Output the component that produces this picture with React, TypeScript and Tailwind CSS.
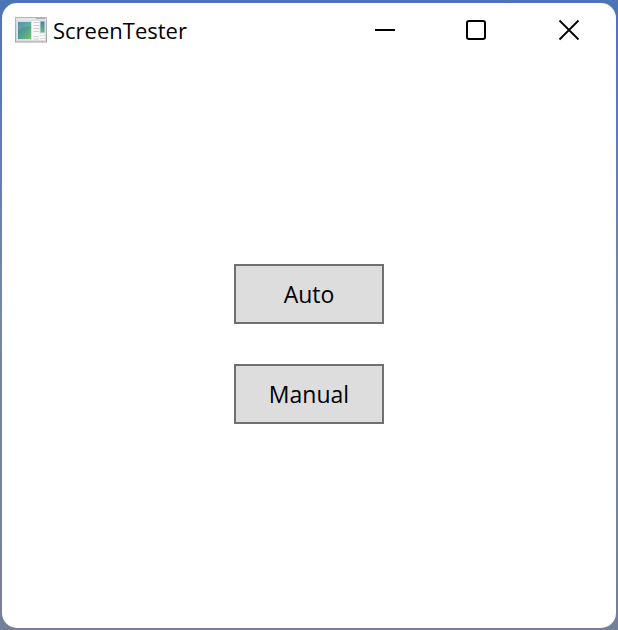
import React from "react";

function AppIcon() {
  return (
    <svg width="32" height="26" viewBox="0 0 32 26" aria-hidden="true">
      <defs>
        <linearGradient id="pane" x1="0" y1="0" x2="1" y2="1">
          <stop offset="0" stopColor="#4680a6" />
          <stop offset="0.5" stopColor="#4f9f94" />
          <stop offset="1" stopColor="#6fc36a" />
        </linearGradient>
        <linearGradient id="side" x1="0" y1="0" x2="0" y2="1">
          <stop offset="0" stopColor="#4680a8" />
          <stop offset="1" stopColor="#68bb78" />
        </linearGradient>
        <linearGradient id="frame" x1="0" y1="0" x2="0" y2="1">
          <stop offset="0" stopColor="#b4b9c1" />
          <stop offset="1" stopColor="#a2a2a2" />
        </linearGradient>
      </defs>
      <rect x="0.5" y="0.5" width="31" height="24.5" fill="#dcdddf" stroke="url(#frame)" />
      <path d="M1 1.5H31V3H1z" fill="#e6e9ee" />
      <path d="M21 1H30V2H21z" fill="#a4aab5" />
      <rect x="2" y="4" width="28" height="19" fill="#f8f8f8" />
      <rect x="2" y="4" width="15" height="19" fill="#d5e2e2" />
      <rect x="3" y="5" width="13" height="17" fill="url(#pane)" />
      <path d="M3 5H16V9Q9 9 3 14z" fill="#ffffff" opacity="0.12" />
      <path d="M18.500 5.500H24M18.500 8.500H24M18.500 11.500H24M18.500 14.500H24M18.500 19.500H24M18.500 22H24" stroke="#cfcfcf" />
      <rect x="25" y="4" width="5" height="12" fill="url(#side)" stroke="#d8e2e6" />
      <path d="M25 18.500H30M25 21.500H30" stroke="#dddddd" />
    </svg>
  );
}

function CaptionButton({ label, children }: { label: string; children: React.ReactNode }) {
  return (
    <button type="button" aria-label={label} className="flex w-[92px] items-center justify-center hover:bg-gray-100">
      <svg width="24" height="24" viewBox="0 0 24 24" fill="none" stroke="#000000" strokeWidth="2" aria-hidden="true">
        {children}
      </svg>
    </button>
  );
}

function ActionButton({ children }: { children: React.ReactNode }) {
  return (
    <button type="button" className="h-[60px] w-[150px] border-2 border-[#707070] bg-[#dddddd] text-[23px] leading-8 hover:bg-[#bee6fd]">
      {children}
    </button>
  );
}

export default function App() {
  return (
    <div className="flex min-h-screen flex-col bg-linear-to-b from-[#4c75b5] via-[#7488aa] to-[#747f99] px-0.5 pt-[3px] pb-0.5 font-['Open_Sans','Noto_Sans',sans-serif] text-black">
      <div className="flex grow flex-col overflow-hidden rounded-[15px] bg-white">
        <header className="flex h-[57px] pr-px pb-[3px] pl-[13px]">
          <div className="flex grow items-center gap-1.5">
            <AppIcon />
            <h1 className="text-[22px] leading-8">ScreenTester</h1>
          </div>
          <CaptionButton label="Minimize">
            <path d="M2 12H22" />
          </CaptionButton>
          <CaptionButton label="Maximize">
            <rect x="2" y="3" width="18" height="18" rx="2" />
          </CaptionButton>
          <CaptionButton label="Close">
            <path d="M2.500 2.500L21.500 21.500M21.500 2.500L2.500 21.500" strokeWidth="1.800" />
          </CaptionButton>
        </header>
        <main className="flex grow flex-col items-center justify-center gap-10">
          <ActionButton>Auto</ActionButton>
          <ActionButton>Manual</ActionButton>
        </main>
      </div>
    </div>
  );
}
